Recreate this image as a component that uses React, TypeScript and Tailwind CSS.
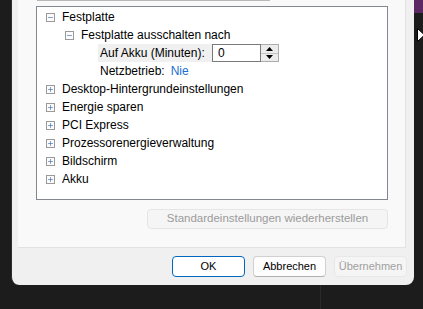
import { Minus, Plus } from "lucide-react";

const font = { fontFamily: '"Liberation Sans", Arial, sans-serif' };

function ToggleBox({ open }: { open: boolean }) {
  return (
    <span className="w-[9px] h-[9px] border border-[#9a9a9a] bg-[#fbfbfb] flex items-center justify-center shrink-0">
      {open ? (
        <Minus size={7} strokeWidth={2} className="text-[#2c5fa8]" />
      ) : (
        <Plus size={7} strokeWidth={2} className="text-[#2c5fa8]" />
      )}
    </span>
  );
}

function TreeRow({ label, open = false, indent = 0 }: { label: string; open?: boolean; indent?: number }) {
  return (
    <div className="h-[18px] flex items-center" style={{ paddingLeft: 9 + indent }}>
      <ToggleBox open={open} />
      <span className="ml-[7px] leading-none">{label}</span>
    </div>
  );
}

export default function App() {
  const closed = [
    "Desktop-Hintergrundeinstellungen",
    "Energie sparen",
    "PCI Express",
    "Prozessorenergieverwaltung",
    "Bildschirm",
    "Akku",
  ];

  return (
    <div
      className="w-[423px] h-[309px] bg-[#1c1c1c] flex overflow-hidden relative text-[12px] text-black"
      style={font}
    >
      {/* left desktop strip */}
      <div className="w-[11px] shrink-0" />

      {/* Dialog */}
      <div className="w-[403px] shrink-0 flex flex-col">
        <div className="h-[285px] bg-[#f0f0f0] rounded-b-[8px] border-l border-[#2e2e2e] flex flex-col">
          {/* Settings panel */}
          <div className="ml-[6px] w-[388px] h-[248px] bg-[#f9f9f9] border-r border-b border-[#e2e2e2] flex flex-col">
            <div className="ml-[19px] w-[233px] h-[1px] bg-[#b8b8b8]" />

            {/* Tree */}
            <div className="ml-[18px] mt-[5px] w-[352px] h-[194px] bg-white border border-[#828790] pt-[1px]">
              <TreeRow label="Festplatte" open />
              <TreeRow label="Festplatte ausschalten nach" open indent={19} />

              <div className="h-[18px] flex items-center pl-[61px]">
                <span className="h-[18px] w-[114px] bg-[#f0f0f0] flex items-center pl-[2px]">
                  Auf Akku (Minuten):
                </span>
                <span className="h-[18px] w-[49px] border border-[#7a7a7a] bg-white flex items-center pl-[5px]">
                  0
                </span>
                <span className="h-[18px] w-[18px] border border-[#adadad] border-l-0 flex flex-col">
                  <span className="flex-1 bg-[#ececec] border-b border-[#c4c4c4] flex items-center justify-center">
                    <svg width="7" height="4" viewBox="0 0 7 4">
                      <path d="M0 4 L3.5 0 L7 4 Z" fill="#000" />
                    </svg>
                  </span>
                  <span className="flex-1 bg-[#ececec] flex items-center justify-center">
                    <svg width="7" height="4" viewBox="0 0 7 4">
                      <path d="M0 0 L3.5 4 L7 0 Z" fill="#000" />
                    </svg>
                  </span>
                </span>
              </div>

              <div className="h-[18px] flex items-center pl-[63px]">
                <span>Netzbetrieb:</span>
                <span className="ml-[6px] text-[#1a6fd1]">Nie</span>
              </div>

              {closed.map((c) => (
                <TreeRow key={c} label={c} />
              ))}
            </div>

            <div className="mt-[9px] ml-[129px] w-[241px] h-[20px] rounded-[4px] bg-[#f5f5f5] border border-[#e5e5e5] text-[#9b9b9b] text-[11.5px] flex items-center justify-center">
              Standardeinstellungen wiederherstellen
            </div>
          </div>

          {/* Dialog buttons */}
          <div className="mt-[8px] ml-[160px] flex gap-[8px] text-[11px]">
            <button className="w-[73px] h-[21px] rounded-[4px] bg-white border border-[#0067c0] flex items-center justify-center">
              OK
            </button>
            <button className="w-[73px] h-[21px] rounded-[4px] bg-[#fdfdfd] border border-[#d0d0d0] border-b-[#b0b0b0] flex items-center justify-center">
              Abbrechen
            </button>
            <button className="w-[73px] h-[21px] rounded-[4px] bg-[#f5f5f5] border border-[#e8e8e8] text-[#a0a0a0] flex items-center justify-center">
              Übernehmen
            </button>
          </div>
        </div>

        {/* desktop below dialog */}
        <div className="flex-1 flex">
          <div className="ml-[309px] w-[1px] bg-[#2a2a2a]" />
        </div>
      </div>

      {/* right desktop strip */}
      <div className="flex-1 flex flex-col">
        <div className="h-[13px] bg-[#5b2864]" />
      </div>

      {/* mouse cursor */}
      <svg className="absolute left-[417px] top-[28px]" width="8" height="14" viewBox="0 0 8 14">
        <path d="M0.5 0.5 L7.5 7 L0.5 13.5 Z" fill="#fff" stroke="#000" strokeWidth="1" />
      </svg>
    </div>
  );
}
